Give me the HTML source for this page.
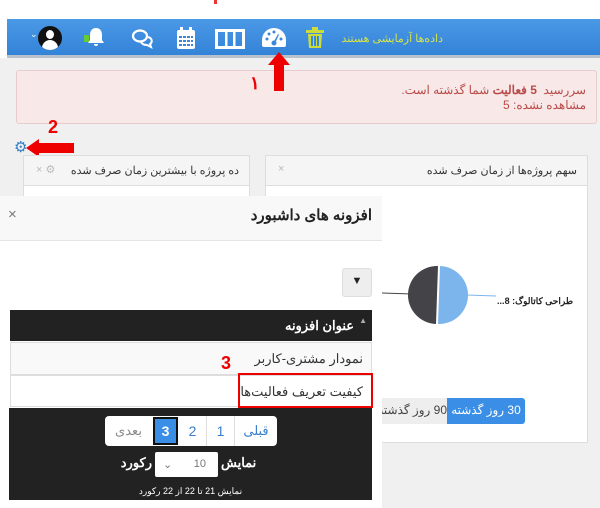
<!DOCTYPE html>
<html><head><meta charset="utf-8"><style>
*{margin:0;padding:0;box-sizing:border-box}
body{width:600px;height:508px;position:relative;overflow:hidden;background:#fff;font-family:"Liberation Sans","Noto Sans CJK SC",sans-serif;}
.a{position:absolute}
.rtl{direction:rtl}
</style></head><body>
<div class="a" style="left:0;top:58px;width:600px;height:450px;background:#f0f0f0"></div>
<div class="a" style="left:214px;top:0;width:3px;height:4px;background:#e33"></div>
<!-- navbar -->
<div class="a" style="left:7px;top:19px;width:593px;height:36px;background:linear-gradient(#4b98e6,#3383d8)"></div>
<div class="a" style="left:7px;top:55px;width:593px;height:3px;background:#b9c2cc"></div>
<div class="a" style="left:30px;top:29px;color:#fff;font-size:9px">⌄</div>
<div class="a" style="left:38px;top:26px;width:24px;height:24px;border-radius:50%;background:#111;overflow:hidden">
 <div class="a" style="left:8px;top:4px;width:8px;height:9px;border-radius:50%;background:#fff"></div>
 <div class="a" style="left:4px;top:14px;width:16px;height:12px;border-radius:8px 8px 0 0;background:#fff"></div></div>
<svg class="a" style="left:84px;top:26px" width="24" height="24" viewBox="0 0 24 24"><rect x="0" y="9" width="5" height="7" fill="#6c3" /><path d="M12 2c-4 0-6 3-6 7v5l-2 3h16l-2-3V9c0-4-2-7-6-7z M10 18a2 2 0 0 0 4 0z" fill="#fff"/></svg>
<svg class="a" style="left:131px;top:28px" width="24" height="22" viewBox="0 0 24 22"><ellipse cx="9" cy="8" rx="7" ry="5.5" fill="none" stroke="#fff" stroke-width="2.2"/><path d="M17 9c4 1 5 5 2 7l1 3-4-2c-3 0-5-1-6-3" fill="none" stroke="#fff" stroke-width="2"/></svg>
<svg class="a" style="left:176px;top:26px" width="20" height="24" viewBox="0 0 20 24"><rect x="1" y="4" width="18" height="19" rx="2" fill="#fff"/><rect x="4" y="1" width="3" height="6" fill="#fff"/><rect x="13" y="1" width="3" height="6" fill="#fff"/><g fill="#3a88dc"><rect x="3" y="10" width="3" height="2"/><rect x="7" y="10" width="3" height="2"/><rect x="11" y="10" width="3" height="2"/><rect x="15" y="10" width="2" height="2"/><rect x="3" y="14" width="3" height="2"/><rect x="7" y="14" width="3" height="2"/><rect x="11" y="14" width="3" height="2"/><rect x="15" y="14" width="2" height="2"/><rect x="3" y="18" width="3" height="2"/><rect x="7" y="18" width="3" height="2"/><rect x="11" y="18" width="3" height="2"/><rect x="15" y="18" width="2" height="2"/></g></svg>
<svg class="a" style="left:215px;top:29px" width="30" height="20" viewBox="0 0 30 20"><rect x="1.5" y="1.5" width="27" height="17" fill="none" stroke="#fff" stroke-width="3"/><rect x="10" y="1" width="2.5" height="18" fill="#fff"/><rect x="18" y="1" width="2.5" height="18" fill="#fff"/></svg>
<svg class="a" style="left:261px;top:27px" width="26" height="22" viewBox="0 0 26 22"><path d="M13 1A12 12 0 0 0 1 13v5a2 2 0 0 0 2 2h20a2 2 0 0 0 2-2v-5A12 12 0 0 0 13 1z" fill="#fff"/><g fill="#3a88dc"><circle cx="6" cy="12" r="1.5"/><circle cx="8" cy="7" r="1.5"/><circle cx="13" cy="5" r="1.5"/><circle cx="20" cy="12" r="1.5"/><circle cx="13" cy="16" r="2.5"/><path d="M12 16l5-9 1 .5-4 9z"/></g></svg>
<svg class="a" style="left:306px;top:27px" width="18" height="22" viewBox="0 0 18 22"><rect x="0" y="3" width="18" height="3" fill="#cddc39"/><rect x="6" y="0" width="6" height="4" fill="#cddc39"/><path d="M2 7h14l-1 14H3z" fill="#cddc39"/><g fill="#3a88dc"><rect x="5" y="9" width="2" height="10"/><rect x="8" y="9" width="2" height="10"/><rect x="11" y="9" width="2" height="10"/></g></svg>
<div class="a rtl" style="left:340px;top:32px;width:103px;text-align:right;color:#d8e34a;font-size:11px">داده‌ها آزمایشی هستند</div>
<!-- alert -->
<div class="a rtl" style="left:16px;top:70px;width:581px;height:54px;background:#f8e8e8;border:1px solid #e7cccc;border-radius:3px;padding:12px 10px 0 0;color:#b94a48;font-size:12px;line-height:15px">سررسید &nbsp;<b>5 فعالیت</b> شما گذشته است.<br>مشاهده نشده: 5</div>
<!-- arrow 1 -->
<div class="a" style="left:268px;top:52px;width:0;height:0;border-left:11px solid transparent;border-right:11px solid transparent;border-bottom:13px solid #e00"></div>
<div class="a" style="left:274px;top:64px;width:10px;height:27px;background:#e00"></div>
<div class="a" style="left:250px;top:73px;color:#e00;font-size:18px;font-weight:bold">١</div>
<!-- gear & arrow 2 -->
<div class="a" style="left:14px;top:138px;color:#2f7fc7;font-size:15px">⚙</div>
<div class="a" style="left:48px;top:117px;color:#e00;font-size:18px;font-weight:bold">2</div>
<div class="a" style="left:26px;top:139px;width:0;height:0;border-top:9px solid transparent;border-bottom:9px solid transparent;border-right:13px solid #e00"></div>
<div class="a" style="left:38px;top:143px;width:36px;height:10px;background:#e00"></div>
<!-- panels -->
<div class="a" style="left:23px;top:155px;width:227px;height:60px;background:#fff;border:1px solid #ddd"></div>
<div class="a rtl" style="left:23px;top:155px;width:227px;height:31px;background:#f5f5f5;border:1px solid #ddd;padding:8px 10px 0 0;font-size:11px;color:#333">ده پروژه با بیشترین زمان صرف شده<span style="position:absolute;left:12px;top:7px;color:#bbb">⚙ ×</span></div>
<div class="a" style="left:265px;top:155px;width:323px;height:288px;background:#fff;border:1px solid #ddd"></div>
<div class="a rtl" style="left:265px;top:155px;width:323px;height:31px;background:#f5f5f5;border:1px solid #ddd;padding:8px 10px 0 0;font-size:11px;color:#333">سهم پروژه‌ها از زمان صرف شده<span style="position:absolute;left:12px;top:7px;color:#bbb">×</span></div>
<svg class="a" style="left:382px;top:260px" width="120" height="70" viewBox="0 0 120 70"><line x1="0" y1="33" x2="30" y2="34" stroke="#444"/><line x1="85" y1="35" x2="114" y2="36" stroke="#7cb5ec"/><path d="M58 6A29 29 0 0 1 56 64Z" fill="#7cb5ec"/><path d="M56 6A29 29 0 0 0 54 64Z" fill="#434348"/></svg>
<div class="a rtl" style="left:490px;top:296px;width:83px;text-align:right;font-size:9px;font-weight:bold;color:#222;white-space:nowrap">طراحی کاتالوگ: 8...</div>
<div class="a rtl" style="left:382px;top:398px;width:65px;height:26px;background:#eee;font-size:12px;color:#444;padding-top:5px;overflow:hidden;white-space:nowrap;text-align:right">90 روز گذشته</div>
<div class="a rtl" style="left:447px;top:398px;width:78px;height:26px;background:#3a8ee6;border-radius:0 3px 3px 0;font-size:12px;color:#fff;padding-top:5px;text-align:center">30 روز گذشته</div>
<!-- modal -->
<div class="a" style="left:0;top:196px;width:382px;height:312px;background:#fff"></div>
<div class="a" style="left:0;top:196px;width:382px;height:45px;background:#f8f8f8;border-bottom:1px solid #e5e5e5"></div>
<div class="a rtl" style="left:150px;top:206px;width:222px;text-align:right;font-size:15px;font-weight:bold;color:#222">افزونه های داشبورد</div>
<div class="a" style="left:8px;top:206px;font-size:15px;color:#777">×</div>
<div class="a" style="left:342px;top:268px;width:30px;height:29px;background:#eee;border:1px solid #ddd;border-radius:3px;text-align:center;padding-top:6px;font-size:11px;color:#222">▼</div>
<div class="a rtl" style="left:10px;top:310px;width:362px;height:31px;background:#222;color:#fff;font-size:13px;font-weight:bold;padding:8px 18px 0 0">عنوان افزونه<span style="position:absolute;right:5px;top:6px;font-size:8px;color:#aaa">▲</span></div>
<div class="a rtl" style="left:10px;top:342px;width:362px;height:33px;background:#f9f9f9;border:1px solid #ddd;font-size:13px;color:#333;padding:8px 8px 0 0">نمودار مشتری-کاربر</div>
<div class="a rtl" style="left:10px;top:375px;width:362px;height:32px;background:#fff;border:1px solid #ddd;font-size:13px;color:#333;padding:8px 8px 0 0">کیفیت تعریف فعالیت‌ها</div>
<div class="a" style="left:238px;top:373px;width:135px;height:35px;border:2px solid #e00"></div>
<div class="a" style="left:221px;top:353px;color:#e00;font-size:18px;font-weight:bold">3</div>
<div class="a" style="left:9px;top:408px;width:363px;height:92px;background:#222"></div>
<div class="a" style="left:105px;top:416px;width:172px;height:30px;background:#fff;border-radius:4px"></div>
<div class="a" style="left:105px;top:416px;width:47px;height:30px;color:#888;font-size:13px;text-align:center;padding-top:7px">بعدی</div>
<div class="a" style="left:153px;top:417px;width:25px;height:28px;background:#3a8ee6;border:2px solid #111;color:#fff;font-size:14px;font-weight:bold;text-align:center;padding-top:4px">3</div>
<div class="a" style="left:179px;top:416px;width:28px;height:30px;border-right:1px solid #ddd;color:#3a7ecb;font-size:14px;text-align:center;padding-top:7px">2</div>
<div class="a" style="left:207px;top:416px;width:28px;height:30px;border-right:1px solid #ddd;color:#3a7ecb;font-size:14px;text-align:center;padding-top:7px">1</div>
<div class="a" style="left:235px;top:416px;width:42px;height:30px;color:#3a7ecb;font-size:13px;text-align:center;padding-top:7px">قبلی</div>
<div class="a" style="left:155px;top:452px;width:63px;height:25px;background:#fff;border-radius:2px;font-size:11px;color:#777;padding:6px 0 0 8px">⌄<span style="position:absolute;right:12px;top:6px">10</span></div>
<div class="a" style="left:221px;top:455px;color:#fff;font-size:13px;font-weight:bold">نمایش</div>
<div class="a rtl" style="left:110px;top:455px;width:42px;text-align:right;color:#fff;font-size:13px;font-weight:bold;white-space:nowrap">رکورد</div>
<div class="a rtl" style="left:9px;top:486px;width:363px;text-align:center;color:#fff;font-size:9px">نمایش 21 تا 22 از 22 رکورد</div>
</body></html>
